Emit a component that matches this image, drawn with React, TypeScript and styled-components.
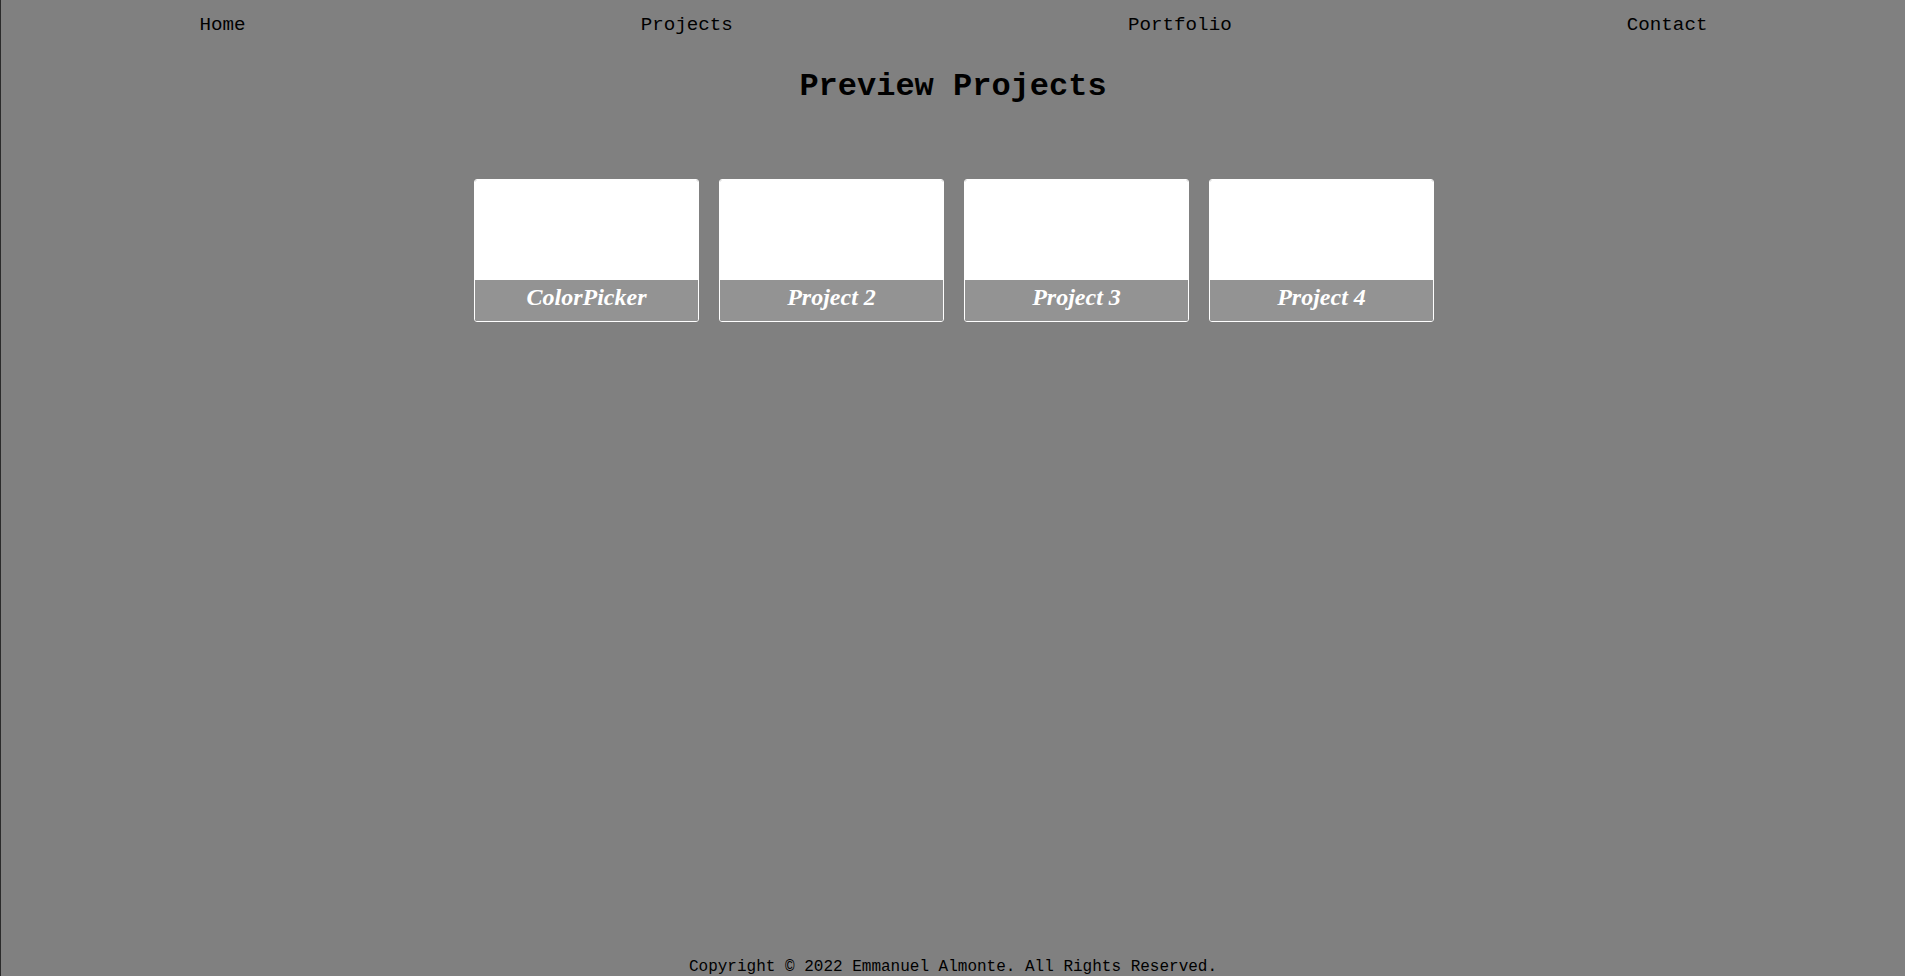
import styled, { createGlobalStyle } from "styled-components";

const GlobalStyle = createGlobalStyle`
  html, body {
    margin: 0;
    padding: 0;
    background-color: #808080;
  }
  * {
    box-sizing: border-box;
  }
`;

const Page = styled.div`
  min-height: 100vh;
  display: flex;
  flex-direction: column;
  border-left: 1px solid #2b2b2b;
  font-family: "Liberation Mono", "Courier New", monospace;
  color: #000;
`;

const Nav = styled.nav`
  display: flex;
  justify-content: space-around;
  align-items: center;
  padding: 14px 0 0 1px;
`;

const NavLink = styled.a`
  font-size: 19.2px;
  line-height: 22px;
  color: #000;
  text-decoration: none;
  cursor: pointer;
`;

const Main = styled.main`
  flex: 1;
  display: flex;
  flex-direction: column;
  align-items: center;
`;

const Title = styled.h1`
  font-size: 32px;
  line-height: 37px;
  font-weight: 700;
  margin: 31.5px 0 0;
`;

const Grid = styled.div`
  display: flex;
  gap: 20px;
  margin-top: 74px;
  padding-left: 2px;
`;

const Card = styled.div`
  width: 225px;
  border: 1px solid #fff;
  border-radius: 3px;
  overflow: hidden;
  display: flex;
  flex-direction: column;
`;

const Preview = styled.div`
  height: 100px;
  background: #fff;
`;

const Caption = styled.div`
  height: 41px;
  padding-bottom: 5px;
  background: #939393;
  display: flex;
  align-items: center;
  justify-content: center;
  font-family: "Liberation Serif", "Times New Roman", serif;
  font-style: italic;
  font-weight: 700;
  font-size: 24px;
  color: #fff;
`;

const Footer = styled.footer`
  text-align: center;
  font-size: 16px;
  line-height: 19px;
  margin-bottom: -1px;
`;

const links = ["Home", "Projects", "Portfolio", "Contact"];
const projects = ["ColorPicker", "Project 2", "Project 3", "Project 4"];

function App() {
  return (
    <>
      <GlobalStyle />
      <Page>
        <Nav>
          {links.map((l) => (
            <NavLink key={l}>{l}</NavLink>
          ))}
        </Nav>
        <Main>
          <Title>Preview Projects</Title>
          <Grid>
            {projects.map((p) => (
              <Card key={p}>
                <Preview />
                <Caption>{p}</Caption>
              </Card>
            ))}
          </Grid>
        </Main>
        <Footer>Copyright © 2022 Emmanuel Almonte. All Rights Reserved.</Footer>
      </Page>
    </>
  );
}

export default App;
